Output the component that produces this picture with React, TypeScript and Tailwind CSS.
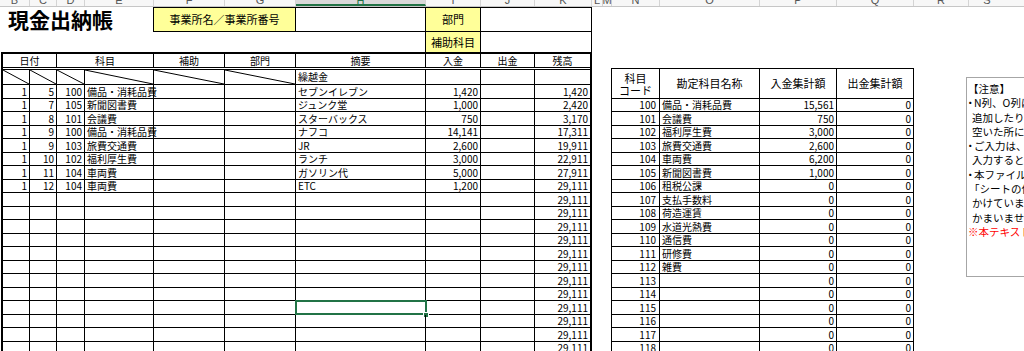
import React from "react";

type Col = { l: string; w: string; sel?: boolean; noLine?: boolean };

const stripCols: Col[] = [
  { l: "B", w: "w-[30px]" },
  { l: "C", w: "w-[27px]" },
  { l: "D", w: "w-[28px]" },
  { l: "E", w: "w-[69px]" },
  { l: "F", w: "w-[71px]" },
  { l: "G", w: "w-[71px]" },
  { l: "H", w: "w-[130px]", sel: true },
  { l: "I", w: "w-[55px]" },
  { l: "J", w: "w-[54px]" },
  { l: "K", w: "w-[57px]" },
  { l: "L", w: "w-[11px]" },
  { l: "M", w: "w-[9px]" },
  { l: "N", w: "w-[48px]" },
  { l: "O", w: "w-[100px]" },
  { l: "P", w: "w-[77px]" },
  { l: "Q", w: "w-[77px]" },
  { l: "R", w: "w-[55px]" },
  { l: "S", w: "w-[36px]", noLine: true },
];

const filled: string[][] = [
  ["1", "5", "100", "備品・消耗品費", "セブンイレブン", "1,420", "", "1,420"],
  ["1", "7", "105", "新聞図書費", "ジュンク堂", "1,000", "", "2,420"],
  ["1", "8", "101", "会議費", "スターバックス", "750", "", "3,170"],
  ["1", "9", "100", "備品・消耗品費", "ナフコ", "14,141", "", "17,311"],
  ["1", "9", "103", "旅費交通費", "JR", "2,600", "", "19,911"],
  ["1", "10", "102", "福利厚生費", "ランチ", "3,000", "", "22,911"],
  ["1", "11", "104", "車両費", "ガソリン代", "5,000", "", "27,911"],
  ["1", "12", "104", "車両費", "ETC", "1,200", "", "29,111"],
];
const leftRows: string[][] = [
  ...filled,
  ...Array.from({ length: 12 }, () => ["", "", "", "", "", "", "", "29,111"]),
];

const rightNames: [string, string, string][] = [
  ["備品・消耗品費", "15,561", "0"],
  ["会議費", "750", "0"],
  ["福利厚生費", "3,000", "0"],
  ["旅費交通費", "2,600", "0"],
  ["車両費", "6,200", "0"],
  ["新聞図書費", "1,000", "0"],
  ["租税公課", "0", "0"],
  ["支払手数料", "0", "0"],
  ["荷造運賃", "0", "0"],
  ["水道光熱費", "0", "0"],
  ["通信費", "0", "0"],
  ["研修費", "0", "0"],
  ["雑費", "0", "0"],
];
const rightRows = Array.from({ length: 19 }, (_, j) => {
  const n = rightNames[j];
  return { code: String(100 + j), name: n ? n[0] : "", p: n ? n[1] : "0", q: n ? n[2] : "0" };
});

function ColumnStrip() {
  return (
    <div className="flex h-[7px] overflow-hidden bg-[#f7f7f7] border-b border-[#c6c6c6]">
      {stripCols.map((c) => (
        <div
          key={c.l}
          className={`${c.w} shrink-0 ${c.noLine ? "" : "border-r border-[#d4d4d4]"} ${
            c.sel ? "bg-[#d9d9d9] border-b-2 border-b-[#217346]" : ""
          }`}
        >
          <div
            className={`-mt-[9px] h-[18px] flex items-center justify-center text-[11px] font-['Liberation_Sans',sans-serif] ${
              c.sel ? "text-[#217346]" : "text-[#555555]"
            }`}
          >
            {c.l}
          </div>
        </div>
      ))}
      <div className="flex-1" />
    </div>
  );
}

function Diag({ w }: { w: string }) {
  return (
    <div className={`${w} shrink-0 border-r border-black`}>
      <svg className="block w-full h-full" viewBox="0 0 100 100" preserveAspectRatio="none">
        <line x1="0" y1="0" x2="100" y2="100" stroke="black" strokeWidth="1" vectorEffect="non-scaling-stroke" />
      </svg>
    </div>
  );
}

function C({
  w,
  align,
  children,
  last,
  ov,
}: {
  w: string;
  align: "l" | "r" | "c";
  children?: React.ReactNode;
  last?: boolean;
  ov?: boolean;
}) {
  const a = align === "r" ? "justify-end pr-[2px]" : align === "c" ? "justify-center" : "justify-start pl-[2px]";
  return (
    <div
      className={`${w} shrink-0 flex items-center whitespace-nowrap ${ov ? "" : "overflow-hidden"} ${a} ${
        last ? "" : "border-r border-black"
      }`}
    >
      {ov ? <span className="relative">{children}</span> : children}
    </div>
  );
}

function LeftBlock() {
  return (
    <div className="w-[592px] shrink-0">
      {/* row 1 */}
      <div className="flex h-[25px]">
        <div className="w-[153px] shrink-0 flex items-center pl-[8px] text-[21px] font-bold leading-none">
          現金出納帳
        </div>
        <div className="w-[143px] shrink-0 bg-[#ffff99] border border-black flex items-center justify-center text-[11px]">
          事業所名／事業所番号
        </div>
        <div className="w-[130px] shrink-0 border-y border-r border-black" />
        <div className="w-[55px] shrink-0 bg-[#ffff99] border-y border-r border-black flex items-center justify-center text-[11px]">
          部門
        </div>
        <div className="w-[111px] shrink-0 border-y border-r border-black" />
      </div>
      {/* row 2 */}
      <div className="flex h-[20px]">
        <div className="w-[425px] shrink-0" />
        <div className="w-[56px] shrink-0 bg-[#ffff99] border-x border-black flex items-center justify-center text-[11px]">
          補助科目
        </div>
        <div className="w-[111px] shrink-0 border-r border-black" />
      </div>
      {/* table */}
      <div className="ml-[1px] w-[591px] border-2 border-black text-[10px] leading-none">
        <div className="flex h-[16px] border-b-[3px] border-double border-black">
          <C w="w-[54px]" align="c">日付</C>
          <C w="w-[97px]" align="c">科目</C>
          <C w="w-[71px]" align="c">補助</C>
          <C w="w-[71px]" align="c">部門</C>
          <C w="w-[130px]" align="c">摘要</C>
          <C w="w-[55px]" align="c">入金</C>
          <C w="w-[54px]" align="c">出金</C>
          <C w="w-[55px]" align="c" last>残高</C>
        </div>
        <div className="flex h-[15px] border-b border-black">
          <Diag w="w-[27px]" />
          <Diag w="w-[27px]" />
          <Diag w="w-[28px]" />
          <Diag w="w-[69px]" />
          <Diag w="w-[71px]" />
          <Diag w="w-[71px]" />
          <C w="w-[130px]" align="l">繰越金</C>
          <C w="w-[55px]" align="r" />
          <C w="w-[54px]" align="r" />
          <C w="w-[55px]" align="r" last />
        </div>
        {leftRows.map((r, i) => (
          <div key={i} className={`flex border-b border-black ${i % 2 === 0 ? "h-[14px]" : "h-[13px]"}`}>
            <C w="w-[27px]" align="r">{r[0]}</C>
            <C w="w-[27px]" align="r">{r[1]}</C>
            <C w="w-[28px]" align="r">{r[2]}</C>
            <C w="w-[69px]" align="l" ov>{r[3]}</C>
            <C w="w-[71px]" align="l" />
            <C w="w-[71px]" align="l" />
            <div className="w-[130px] shrink-0 border-r border-black relative flex items-center pl-[2px] whitespace-nowrap">
              {r[4]}
              {i === 16 && (
                <>
                  <div className="absolute -left-[1px] -top-[1px] -right-[2px] -bottom-[1px] border-2 border-[#217346]" />
                  <div className="absolute -right-[4px] -bottom-[4px] w-[6px] h-[6px] bg-[#217346] border border-white" />
                </>
              )}
            </div>
            <C w="w-[55px]" align="r">{r[5]}</C>
            <C w="w-[54px]" align="r">{r[6]}</C>
            <C w="w-[55px]" align="r" last>{r[7]}</C>
          </div>
        ))}
      </div>
    </div>
  );
}

function RightBlock() {
  return (
    <div className="ml-[19px] w-[303px] shrink-0 text-[10px] leading-none">
      <div className="h-[61px]" />
      <div className="flex h-[31px] border-y border-black text-[11px]">
        <div className="w-[49px] shrink-0 border-x border-black flex flex-col items-center justify-center leading-[12px]">
          <span>科目</span>
          <span>コード</span>
        </div>
        <C w="w-[100px]" align="c">勘定科目名称</C>
        <C w="w-[77px]" align="c">入金集計額</C>
        <C w="w-[77px]" align="c">出金集計額</C>
      </div>
      {rightRows.map((r, j) => (
        <div key={r.code} className={`flex border-b border-black ${j % 2 === 0 ? "h-[13px]" : "h-[14px]"}`}>
          <div className="w-[49px] shrink-0 border-x border-black flex items-center justify-end pr-[3px]">{r.code}</div>
          <C w="w-[100px]" align="l">{r.name}</C>
          <C w="w-[77px]" align="r">{r.p}</C>
          <C w="w-[77px]" align="r">{r.q}</C>
        </div>
      ))}
    </div>
  );
}

function Dot() {
  return <span className="inline-block w-[6px] -translate-x-[3px]">・</span>;
}

function NoteBlock() {
  return (
    <div className="ml-[52px] shrink-0">
      <div className="h-[70px]" />
      <div className="w-[140px] h-[200px] border border-[#a6a6a6] pl-[1px] pt-[4px] text-[10.5px] leading-[14.3px] whitespace-nowrap">
        <div>【注意】</div>
        <div><Dot />N列、O列は</div>
        <div className="pl-[4px]">追加したり、</div>
        <div className="pl-[4px]">空いた所に</div>
        <div><Dot />ご入力は、</div>
        <div className="pl-[4px]">入力すると</div>
        <div><Dot />本ファイルは</div>
        <div className="pl-[1px]">「シートの保護」</div>
        <div className="pl-[4px]">かけていません</div>
        <div className="pl-[4px]">かまいません。</div>
        <div className="text-[#ff0000]">※本テキストの</div>
      </div>
    </div>
  );
}

export default function App() {
  return (
    <div className="w-[1024px] h-[351px] overflow-hidden bg-white text-black font-['Noto_Sans_CJK_JP',sans-serif]">
      <ColumnStrip />
      <div className="flex">
        <LeftBlock />
        <RightBlock />
        <NoteBlock />
      </div>
    </div>
  );
}
